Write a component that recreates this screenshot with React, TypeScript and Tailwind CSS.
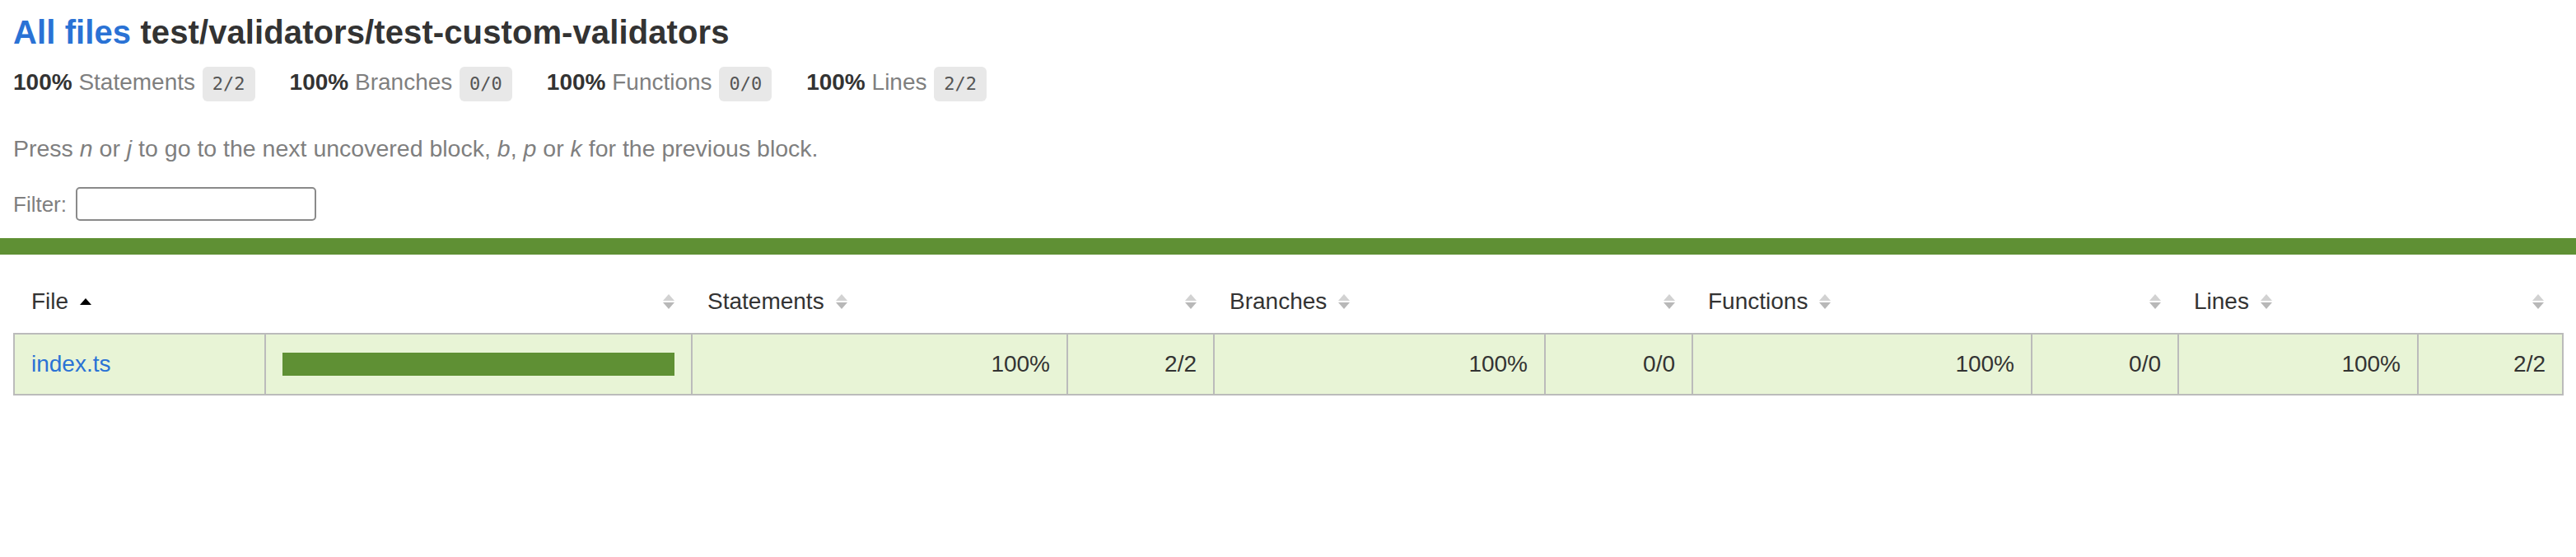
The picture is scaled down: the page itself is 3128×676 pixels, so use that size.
import React from 'react';

const Sorter = () => (
    <svg width="14" height="18" viewBox="0 0 14 18" className="shrink-0">
        <path d="M7 0 L14 8 H0 Z" fill="#d2d2d2" />
        <path d="M0 10 H14 L7 18 Z" fill="#b8b8b8" />
    </svg>
);

const SortedAsc = () => (
    <svg width="14" height="8" viewBox="0 0 14 8" className="shrink-0">
        <path d="M7 0 L14 8 H0 Z" fill="#000" />
    </svg>
);

const stats = [
    { label: 'Statements', frac: '2/2' },
    { label: 'Branches', frac: '0/0' },
    { label: 'Functions', frac: '0/0' },
    { label: 'Lines', frac: '2/2' },
];

const metrics = [
    { name: 'Statements', pct: '100%', abs: '2/2' },
    { name: 'Branches', pct: '100%', abs: '0/0' },
    { name: 'Functions', pct: '100%', abs: '0/0' },
    { name: 'Lines', pct: '100%', abs: '2/2' },
];

const grid = 'grid grid-cols-[305px_518px_456px_178px_402px_179px_412px_178px_291px_174px]';

export default function App() {
    return (
        <div className="w-full min-h-[676px] bg-white text-[#333] font-['Liberation_Sans',Arial,sans-serif]">
            <div className="px-[16px] pt-[20px]">
                <h1 className="text-[40px] font-bold leading-[38px] m-0 tracking-[0.1px]">
                    <a className="text-[#2a72d5]">All files</a> test/validators/test-custom-validators
                </h1>

                {/* summary line */}
                <div className="flex items-center h-[42px] mt-[23px]">
                    {stats.map(s => (
                        <div key={s.label} className="flex items-center pr-[42px]">
                            <span className="text-[28px] leading-[32px] pb-[4px] whitespace-pre">
                                <span className="font-bold">100%</span>
                                <span className="text-[#7f7f7f]"> {s.label} </span>
                            </span>
                            <span className="ml-[1px] bg-[#e8e8e8] text-[#555] rounded-[6px] px-[12px] py-[8px] text-[22px] leading-[26px] font-['DejaVu_Sans_Mono',monospace]">
                                {s.frac}
                            </span>
                        </div>
                    ))}
                </div>

                <p className="text-[28.5px] leading-[30px] text-[#7f7f7f] mt-[42px]">
                    Press <em>n</em> or <em>j</em> to go to the next uncovered block, <em>b</em>, <em>p</em> or <em>k</em> for the previous block.
                </p>

                <div className="flex items-center h-[41px] mt-[32px] text-[26px] leading-[30px] text-[#7f7f7f]">
                    <span>Filter:</span>
                    <input
                        type="search"
                        className="ml-[11px] w-[292px] h-[41px] border-2 border-[#8a8a8a] rounded-[5px] bg-white outline-none"
                    />
                </div>
            </div>

            <div className="h-[20px] bg-[#5f9034] mt-[21px]" />

            <div className="px-[16px] mt-[20px] text-[28px] leading-[32px]">
                {/* header */}
                <div className={`${grid} px-[2px] h-[75px]`}>
                    <div className="flex items-center gap-[14px] px-[20px] pt-[21px] self-start">
                        <span>File</span>
                        <SortedAsc />
                    </div>
                    <div className="flex items-center justify-end px-[20px] pt-[21px] pr-[22px] self-start h-[53px]">
                        <Sorter />
                    </div>
                    {metrics.map(m => (
                        <React.Fragment key={m.name}>
                            <div className="flex items-center gap-[14px] pl-[18px] pr-[20px] pt-[21px] self-start h-[53px]">
                                <span>{m.name}</span>
                                <Sorter />
                            </div>
                            <div className="flex items-center justify-end px-[20px] pr-[22px] pt-[21px] self-start h-[53px]">
                                <Sorter />
                            </div>
                        </React.Fragment>
                    ))}
                </div>

                {/* row */}
                <div className={`${grid} border-2 border-[#bbb] bg-[#e8f4d6] w-[3097px]`}>
                    <div className="px-[20px] py-[20px] border-r-2 border-[#bbb]">
                        <a className="text-[#2a72d5]">index.ts</a>
                    </div>
                    <div className="px-[20px] py-[20px] border-r-2 border-[#bbb] flex items-center">
                        <div className="h-[28px] w-full bg-[#5f9034]" />
                    </div>
                    {metrics.map((m, i) => (
                        <React.Fragment key={m.name}>
                            <div className="px-[20px] py-[20px] border-r-2 border-[#bbb] text-right">{m.pct}</div>
                            <div className={`px-[20px] py-[20px] text-right ${i < 3 ? 'border-r-2 border-[#bbb]' : ''}`}>{m.abs}</div>
                        </React.Fragment>
                    ))}
                </div>
            </div>
        </div>
    );
}
